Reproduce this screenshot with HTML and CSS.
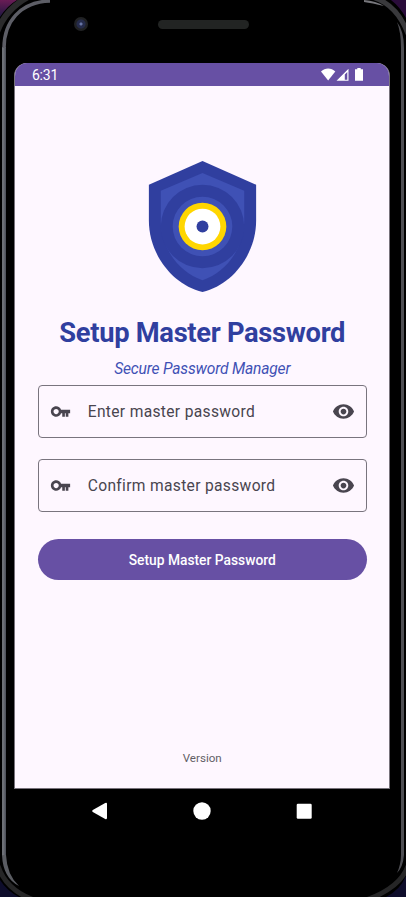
FILE: index.html
```
<!DOCTYPE html>
<html lang="en">
<head>
<meta charset="utf-8">
<title>Setup Master Password</title>
<link rel="stylesheet" href="styles.css">
</head>
<body>
<div class="device">
  <svg class="frame" width="406" height="897" viewBox="0 0 406 897" fill="none" aria-hidden="true">
    <defs>
      <linearGradient id="edge" x1="1" x2="6" y1="0" y2="0" gradientUnits="userSpaceOnUse">
        <stop offset="0" stop-color="#33363a"/>
        <stop offset=".35" stop-color="#777a80"/>
        <stop offset="1" stop-color="#484b55"/>
      </linearGradient>
      <linearGradient id="wall" x1="0" x2="0" y1="0" y2="17" gradientUnits="userSpaceOnUse">
        <stop offset="0" stop-color="#6a1c55"/>
        <stop offset="1" stop-color="#1d1740"/>
      </linearGradient>
    </defs>
    <rect width="406" height="897" fill="#000"/>
    <path d="M-3 32Q6 8 30-4" stroke="#2b2b2c" stroke-width="6"/>
    <path d="M372-3Q397 4 408 34" stroke="#39393c" stroke-width="5"/>
    <path d="M-2 866Q6 890 34 900M408 866Q400 888 366 900" stroke="#262627" stroke-width="5"/>
    <path d="M2 47V856h4V47Z" fill="url(#edge)"/>
    <path d="M4 48C4 22 20 2 50 1" stroke="#5d5e66" stroke-width="3.500"/>
    <path d="M2 855Q3 878 19 886Q7 875 6 855Z" fill="#5a5c62"/>
    <path d="M364 0Q376 1 384 6Q372 3 364 2Z" fill="#77777c"/>
    <path d="M397 22Q404 31 404 48V855Q403 867 397 873Q401 864 401 855V48Q401 32 397 22Z" fill="#4e4e53"/>
    <path d="M0 0H17Q7 6 0 17Z" fill="url(#wall)"/>
    <path d="M391 0H406V18Q400 7 391 0Z" fill="#2a0c3b"/>
    <path d="M0 880Q7 891 19 897H0ZM406 876Q400 890 386 897H406Z" fill="#0e0d2b"/>
  </svg>
  <div class="bezel">
    <span class="camera"></span>
    <span class="speaker"></span>
  </div>
  <main class="screen">
    <header class="status">
      <span>6:31</span>
      <svg width="43" height="14" viewBox="0 0 43 14" fill="#fff">
        <path d="M0 3.600C4-.6 10.300-.6 14.300 3.600L7.150 12.500Z"/>
        <path fill-rule="evenodd" d="M15.500 12.800 27.500.8v12ZM23.800 6.500v5.300h2.500V4Z"/>
        <path d="M36.300 0h3.400v1.300H42v11.500h-8V1.300h2.300Z"/>
      </svg>
    </header>
    <section class="content">
      <svg class="logo" viewBox="0 0 24 24">
        <path fill="#303f9f" d="M12 1 3 5v6c0 5.550 3.840 10.740 9 12 5.160-1.260 9-6.450 9-12V5Z"/>
        <path fill="#3f51b5" d="M12 3 5 6v5c0 4.520 2.980 8.690 7 10 4.020-1.310 7-5.480 7-10V6Z"/>
        <circle cx="12" cy="12" r="7" fill="#303f9f"/>
        <circle cx="12" cy="12" r="5" fill="#3f51b5"/>
        <circle cx="12" cy="12" r="4" fill="#ffd600"/>
        <circle cx="12" cy="12" r="3" fill="#fff"/>
        <circle cx="12" cy="12" r="1" fill="#303f9f"/>
      </svg>
      <h1>Setup Master Password</h1>
      <p class="tagline">Secure Password Manager</p>
      <div class="field">
        <svg class="key" viewBox="0 0 24 24"><path d="M12.650 10C11.830 7.670 9.610 6 7 6c-3.310 0-6 2.690-6 6s2.690 6 6 6c2.610 0 4.830-1.670 5.650-4H14v4h3v-4h1v4h3v-4h2v-4Z M7 15c-1.650 0-3-1.350-3-3s1.350-3 3-3 3 1.350 3 3-1.350 3-3 3Z"/></svg>
        <span>Enter master password</span>
        <svg class="eye" viewBox="0 0 24 24"><path d="M12 4.500C7 4.500 2.730 7.610 1 12c1.730 4.390 6 7.500 11 7.500s9.270-3.110 11-7.500c-1.730-4.390-6-7.500-11-7.500ZM12 17c-2.760 0-5-2.240-5-5s2.240-5 5-5 5 2.240 5 5-2.240 5-5 5Zm0-8c-1.660 0-3 1.340-3 3s1.340 3 3 3 3-1.340 3-3-1.340-3-3-3Z"/></svg>
      </div>
      <div class="field">
        <svg class="key" viewBox="0 0 24 24"><path d="M12.650 10C11.830 7.670 9.610 6 7 6c-3.310 0-6 2.690-6 6s2.690 6 6 6c2.610 0 4.830-1.670 5.650-4H14v4h3v-4h1v4h3v-4h2v-4Z M7 15c-1.650 0-3-1.350-3-3s1.350-3 3-3 3 1.350 3 3-1.350 3-3 3Z"/></svg>
        <span>Confirm master password</span>
        <svg class="eye" viewBox="0 0 24 24"><path d="M12 4.500C7 4.500 2.730 7.610 1 12c1.730 4.390 6 7.500 11 7.500s9.270-3.110 11-7.500c-1.730-4.390-6-7.500-11-7.500ZM12 17c-2.760 0-5-2.240-5-5s2.240-5 5-5 5 2.240 5 5-2.240 5-5 5Zm0-8c-1.660 0-3 1.340-3 3s1.340 3 3 3 3-1.340 3-3-1.340-3-3-3Z"/></svg>
      </div>
      <button class="submit">Setup Master Password</button>
      <p class="version">Version</p>
    </section>
  </main>
  <nav class="nav">
    <svg width="16" height="18" viewBox="0 0 16 18"><path fill="#fff" d="M.8 8 13.200 1.100Q15 .3 15 2v14q0 1.700-1.800.9L.8 10Q-.4 9 .8 8Z"/></svg>
    <svg width="18" height="18" viewBox="0 0 18 18"><circle cx="9" cy="9" r="8.700" fill="#fff"/></svg>
    <svg width="16" height="16" viewBox="0 0 16 16"><rect x=".7" y=".7" width="15" height="15" rx="1.300" fill="#fff"/></svg>
  </nav>
</div>
</body>
</html>
```
FILE: styles.css
```
* { box-sizing: border-box; }
body { margin: 0; background: #000; font-family: Roboto, sans-serif; }
.device {
  position: relative;
  width: 406px;
  height: 897px;
  overflow: hidden;
  display: flex;
  flex-direction: column;
}
.frame { position: absolute; inset: 0; }
.bezel, .screen, .nav { position: relative; }
.bezel {
  height: 63px;
  display: flex;
  align-items: flex-start;
  padding: 17px 0 0 74px;
  gap: 70px;
}
.camera {
  width: 14px;
  height: 14px;
  border-radius: 50%;
  background: radial-gradient(circle, #6875a5 0 1px, #252b4b 2px 4px, #202123 5px);
}
.speaker {
  width: 91px;
  height: 9px;
  margin-top: 3px;
  border-radius: 5px;
  background: #222423;
}
.screen {
  width: 376px;
  height: 726px;
  margin-left: 14px;
  border: 1px solid #77727b;
  border-top: 0;
  border-radius: 13px 13px 0 0;
  overflow: hidden;
  background: #fef7ff;
  display: flex;
  flex-direction: column;
}
.status {
  height: 23px;
  flex: none;
  margin: 0 -1px;
  padding: 1px 26px 0 18px;
  background: #6750a4;
  color: #fff;
  font-size: 14px;
  letter-spacing: -.25px;
  display: flex;
  align-items: center;
  justify-content: space-between;
}
.content {
  flex: 1;
  padding: 69px 22px 0 22.500px;
  display: flex;
  flex-direction: column;
  align-items: center;
}
.logo { width: 143px; height: 143px; flex: none; }
h1 {
  margin: 17px 0 0;
  font-size: 27.300px;
  line-height: 36px;
  font-weight: 700;
  letter-spacing: -.3px;
  color: #303f9f;
  white-space: nowrap;
}
.tagline {
  margin: 7px 0 5px;
  font-size: 15.600px;
  line-height: 22px;
  letter-spacing: -.18px;
  font-style: italic;
  color: #3f51b5;
}
.field {
  width: 329px;
  height: 53px;
  flex: none;
  margin-bottom: 21px;
  padding: 0 11px;
  border: 1px solid #79747e;
  border-radius: 4px;
  display: flex;
  align-items: center;
  color: #49454f;
  font-size: 15.600px;
  letter-spacing: .32px;
}
.field svg { fill: #49454f; flex: none; }
.field span { flex: 1; }
.key { width: 21px; height: 21px; margin-right: 17px; }
.eye { width: 23px; height: 23px; }
.submit {
  width: 329px;
  height: 41px;
  margin: 5.500px 0 0;
  padding: 1px 0 0;
  border: 0;
  border-radius: 21px;
  background: #6750a4;
  color: #fff;
  font: 500 13.800px/20px Roboto, sans-serif;
}
.version {
  margin: auto 0 22px;
  font-size: 11.600px;
  line-height: 16px;
  color: #625f66;
}
.nav {
  display: flex;
  align-items: center;
  justify-content: space-between;
  height: 44px;
  padding: 0 94px 0 92px;
}
```
